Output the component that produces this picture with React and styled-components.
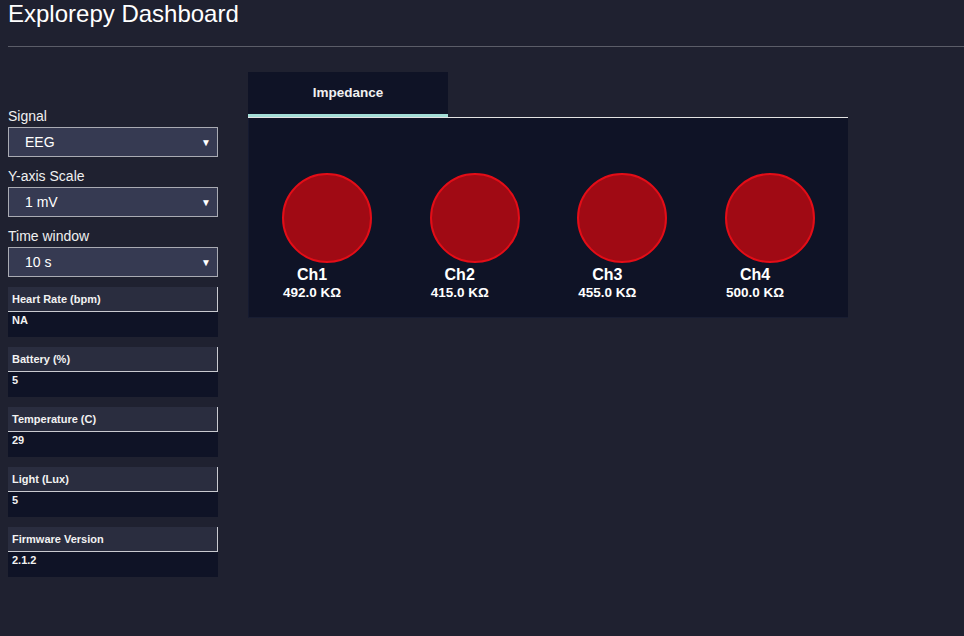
import React from "react";
import styled, { createGlobalStyle } from "styled-components";

const Global = createGlobalStyle`
  html, body { margin: 0; padding: 0; background: #1f2130; }
  body { font-family: "Liberation Sans", Arial, sans-serif; color: #f2f2f2; }
  * { box-sizing: border-box; }
`;

const Page = styled.div`
  min-height: 636px;
  padding: 0 0 0 8px;
  background: #1f2130;
  overflow: hidden;
`;

const Title = styled.h1`
  margin: 0;
  font-size: 24px;
  font-weight: 400;
  line-height: 28px;
  color: #ffffff;
`;

const Rule = styled.hr`
  margin: 18px -20px 0 0;
  border: 0;
  border-top: 1px solid #5b5d68;
  height: 0;
`;

const Body = styled.div`
  display: flex;
  align-items: flex-start;
  gap: 30px;
`;

const Sidebar = styled.aside`
  width: 210px;
  margin-top: 61px;
  display: flex;
  flex-direction: column;
`;

const FieldLabel = styled.div`
  font-size: 14px;
  line-height: 16px;
  color: #f0f0f0;
  margin-bottom: 3px;
`;

const SelectBox = styled.div`
  height: 30px;
  width: 210px;
  border: 1px solid #a9abb3;
  background: #363a52;
  display: flex;
  align-items: center;
  justify-content: space-between;
  padding: 0 6px 0 16px;
  font-size: 14px;
  color: #ffffff;
  margin-bottom: 11px;
`;

const Caret = styled.span`
  font-size: 10px;
  color: #ffffff;
`;

const InfoList = styled.div`
  margin-top: -1px;
  display: flex;
  flex-direction: column;
  gap: 10px;
`;

const InfoGroup = styled.div`
  width: 210px;
`;

const InfoHead = styled.div`
  height: 25px;
  background: #2a2d3f;
  border-right: 1px solid #c9cad0;
  border-bottom: 1px solid #c9cad0;
  padding: 0 4px;
  display: flex;
  align-items: center;
  font-size: 11px;
  font-weight: 700;
  color: #f2f2f2;
`;

const InfoValue = styled.div`
  height: 25px;
  background: #0f1326;
  padding: 1px 4px 0;
  font-size: 11px;
  font-weight: 700;
  line-height: 14px;
  color: #f2f2f2;
`;

const Main = styled.main`
  width: 600px;
  margin-top: 25px;
`;

const TabBar = styled.div`
  display: flex;
  border-bottom: 1px solid #e2e2e2;
`;

const Tab = styled.div`
  width: 200px;
  height: 45px;
  background: #0f1326;
  border-bottom: 3px solid ${(p) => (p.$active ? "#a3ddd6" : "transparent")};
  display: flex;
  align-items: center;
  justify-content: center;
  padding-bottom: 1px;
  font-size: 13.5px;
  font-weight: 700;
  color: #f0f0f0;
`;

const Panel = styled.section`
  height: 200px;
  background: #0f1326;
  border-left: 1px solid #151a30;
  border-bottom: 1px solid #181d32;
  padding: 55px 0 0 4px;
  display: flex;
  gap: 29.7px;
`;

const Channel = styled.div`
  width: 118px;
  display: flex;
  flex-direction: column;
  align-items: center;
`;

const Dot = styled.div`
  width: 90px;
  height: 90px;
  border-radius: 50%;
  background: #a00a14;
  border: 2px solid #e30d17;
  margin-left: 30px;
`;

const ChName = styled.div`
  margin-top: 2px;
  font-size: 16px;
  font-weight: 700;
  line-height: 19px;
  color: #ffffff;
`;

const ChValue = styled.div`
  margin-top: 1px;
  font-size: 13.5px;
  font-weight: 700;
  line-height: 15px;
  color: #ffffff;
`;

const selects = [
  { label: "Signal", value: "EEG" },
  { label: "Y-axis Scale", value: "1 mV" },
  { label: "Time window", value: "10 s" },
];

const infos = [
  { label: "Heart Rate (bpm)", value: "NA" },
  { label: "Battery (%)", value: "5" },
  { label: "Temperature (C)", value: "29" },
  { label: "Light (Lux)", value: "5" },
  { label: "Firmware Version", value: "2.1.2" },
];

const channels = [
  { name: "Ch1", value: "492.0 KΩ" },
  { name: "Ch2", value: "415.0 KΩ" },
  { name: "Ch3", value: "455.0 KΩ" },
  { name: "Ch4", value: "500.0 KΩ" },
];

export default function App() {
  return (
    <Page>
      <Global />
      <Title>Explorepy Dashboard</Title>
      <Rule />
      <Body>
        <Sidebar>
          {selects.map((s) => (
            <div key={s.label}>
              <FieldLabel>{s.label}</FieldLabel>
              <SelectBox>
                <span>{s.value}</span>
                <Caret>▼</Caret>
              </SelectBox>
            </div>
          ))}
          <InfoList>
            {infos.map((i) => (
              <InfoGroup key={i.label}>
                <InfoHead>{i.label}</InfoHead>
                <InfoValue>{i.value}</InfoValue>
              </InfoGroup>
            ))}
          </InfoList>
        </Sidebar>
        <Main>
          <TabBar>
            <Tab $active>Impedance</Tab>
          </TabBar>
          <Panel>
            {channels.map((c) => (
              <Channel key={c.name}>
                <Dot />
                <ChName>{c.name}</ChName>
                <ChValue>{c.value}</ChValue>
              </Channel>
            ))}
          </Panel>
        </Main>
      </Body>
    </Page>
  );
}
